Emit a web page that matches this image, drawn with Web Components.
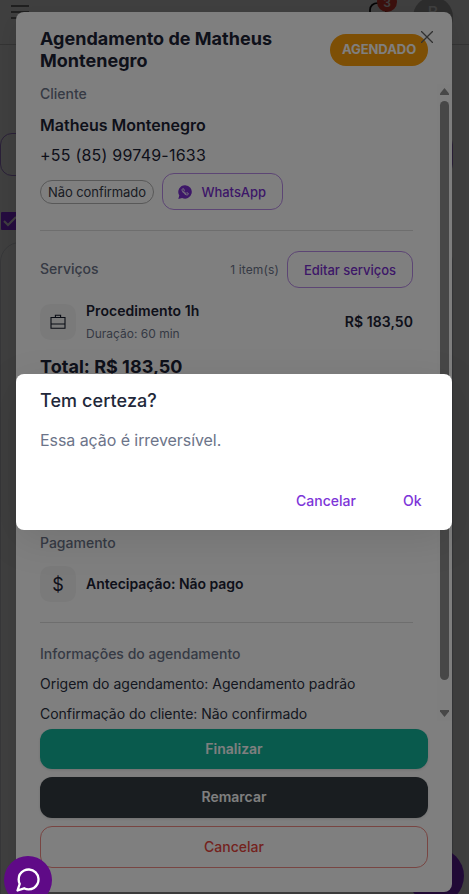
<!DOCTYPE html>
<html lang="pt-BR">
<head>
<meta charset="utf-8">
<title>Agendamento</title>
<style>
body{margin:0;height:894px;overflow:hidden;font-family:Inter,"Liberation Sans",sans-serif;color:#1c2234}
</style>
</head>
<body>
<schedule-app></schedule-app>
<script>
const define=(name,html)=>customElements.define(name,class extends HTMLElement{
  constructor(){super();const t=document.createElement('template');t.innerHTML=html;
    this.attachShadow({mode:'open'}).append(t.content.cloneNode(true));}
});

define('app-backdrop',`<style>
:host{display:block;position:absolute;inset:0;background:rgba(0,0,0,.5)}
</style>`);

define('page-behind',`<style>
:host{display:block;height:894px;background:#fff;overflow:hidden}
header{box-sizing:border-box;height:45px;border-bottom:1px solid #d0d0d0;padding:5px 16px 0 11px;display:flex;justify-content:space-between;align-items:flex-start}
.right{display:flex;gap:16px;align-items:flex-start}
.bell{position:relative;width:28px;height:28px;margin-top:-4px}
.badge{position:absolute;left:8px;top:-9px;width:20px;height:20px;border-radius:50%;background:#f04438;color:#fff;font:600 12px/22px Inter,sans-serif;text-align:center}
.avatar{width:40px;height:40px;border-radius:50%;background:#b4b4b4;color:#fff;font:500 16px/30px Inter,sans-serif;text-align:center;margin-top:-8px}
.pill{box-sizing:border-box;height:43px;margin:88px 16px 0 0;border:1px solid #a880e0;border-radius:12px}
.check{display:block;margin:36px 0 0 1px;width:18px;height:18px}
.card{height:700px;margin:12px 16px 0 0;border:1px solid #dadde4;border-radius:20px}
.fab{position:absolute;left:408px;top:848px;width:56px;height:56px;border-radius:50%;background:#8a2be2}
svg{display:block}
</style>
<header><svg width="18" height="14" viewBox="0 0 18 14" stroke="#808080" stroke-width="2"><path d="M0 1h18M0 7h18M0 13h18"/></svg>
<div class="right"><div class="bell"><svg width="28" height="28" viewBox="0 0 28 28" fill="none" stroke="#111" stroke-width="1.7"><path d="M1 18V9c0-4 3-7 8-7s8 3 8 7v9z"/></svg><span class="badge">3</span></div><div class="avatar">B</div></div></header>
<div class="pill"></div>
<svg class="check" viewBox="0 0 18 18"><rect width="18" height="18" rx="1" fill="#9430ff"/><path d="m3 9 4 4 8-8" fill="none" stroke="#fff" stroke-width="2"/></svg>
<div class="card"></div><div class="fab"></div>`);

define('ui-chip',`<style>
:host{display:block;box-sizing:border-box;height:24px;border:1px solid #b0b0b0;border-radius:12px;padding:0 7px;font-size:13px;letter-spacing:-.07px;line-height:22px;white-space:nowrap;color:#343946}
</style><slot></slot>`);

define('outline-button',`<style>
:host{box-sizing:border-box;display:flex;align-items:center;justify-content:center;height:37px;border:1px solid #b98be8;border-radius:12px;padding:0 16px;color:#7a2fd0;font-size:13px;font-weight:500;letter-spacing:-.03px;white-space:nowrap}
</style><slot></slot>`);

define('action-button',`<style>
:host{box-sizing:border-box;display:flex;align-items:center;justify-content:center;height:40px;border-radius:12px;font-size:14px;font-weight:600;padding-bottom:1px;color:#fff;background:#12b49b;box-shadow:0 1px 3px rgba(0,0,0,.12)}
:host([kind=dark]){height:41px;padding-bottom:2px;background:#323a40}
:host([kind=danger]){height:42px;background:none;border:1px solid #f08a84;color:#e8453c;font-weight:500;box-shadow:none}
</style><slot></slot>`);

define('icon-tile',`<style>
:host{display:flex;flex:none;width:36px;height:36px;border-radius:10px;background:#f5f5f5;align-items:center;justify-content:center;font-size:18px}
</style><slot></slot>`);

define('scroll-bar',`<style>
:host{display:flex;flex-direction:column;align-items:center;width:15px;padding-top:4px;box-sizing:border-box;background:#fdfdfd}
.thumb{width:9px;height:579px;margin:6px 0 30px;border-radius:5px;background:#8f8f8f}
svg{display:block;flex:none}
</style>
<svg width="9" height="7" viewBox="0 0 9 7"><path d="M4.5 0 9 5.5V7H0V5.5z" fill="#909090"/></svg>
<div class="thumb"></div>
<svg width="9" height="7" viewBox="0 0 9 7"><path d="M4.5 7 9 1.5V0H0V1.5z" fill="#909090"/></svg>`);

define('appointment-dialog',`<style>
:host{position:absolute;left:16px;top:12px;width:436px;height:880px;display:flex;flex-direction:column;background:#fff;border-radius:8px;overflow:hidden;box-shadow:0 8px 24px rgba(0,0,0,.1)}
header{height:72px;padding:4px 24px 0;display:flex;align-items:center;justify-content:space-between;box-sizing:border-box}
h2{margin:0;font-size:18px;line-height:22px;font-weight:700;letter-spacing:.02px;width:270px}
.status{width:98px;height:32px;border-radius:16px;background:#fb9e0b;color:#fff;font-size:13px;font-weight:700;letter-spacing:-.06px;line-height:31px;text-align:center}
.close{position:absolute;left:405px;top:19px}
.body{display:flex;height:637px;overflow:hidden;justify-content:space-between}
.col{padding-left:24px;width:373px}
.h{height:20px;line-height:20px;font-size:14px;font-weight:500;color:#6c7489}
.row{display:flex;align-items:center}
.line{height:1px;background:#dcdcdc}
.name{font-size:16px;font-weight:600;line-height:30px;height:30px;margin-top:6px}
.phone{font-size:16px;letter-spacing:.22px;line-height:30px;height:30px}
.small{font-size:12px;color:#6c7489}
.b{font-size:14px;font-weight:600}
.t{font-size:14px;line-height:22px;height:22px;margin-bottom:8px;color:#2a2f3f}
.actions{padding:8px 24px 0;display:flex;flex-direction:column;gap:8px}
svg{display:block}
</style>
<header><h2>Agendamento de Matheus Montenegro</h2><div class="status">AGENDADO</div></header>
<svg class="close" width="12" height="12" viewBox="0 0 12 12" stroke="#606060" stroke-width="1.3"><path d="M0 0 12 12M12 0 0 12"/></svg>
<div class="body"><div class="col">
<div class="h">Cliente</div>
<div class="name">Matheus Montenegro</div>
<div class="phone">+55 (85) 99749-1633</div>
<div class="row" style="margin-top:3px;gap:8px"><ui-chip>Não confirmado</ui-chip><outline-button><svg width="14" height="14" viewBox="0 0 14 14" style="margin:1px 9.500px 0 -1px"><path d="M7.2.2a6.7 6.7 0 1 1-3.1 12.7L.3 14l1-3.6A6.7 6.7 0 0 1 7.2.2z" fill="#7a2fd0"/><path d="M4.8 3.6c-1.3.8-.8 2.6.9 4.4 1.700 1.800 3.700 2.600 4.600 1.200.3-.6.1-.8-1.500-1.500l-.8.8C6.900 8.100 6 7.200 5.600 6.200l.7-.8c-.4-1.200-.7-1.900-1.500-1.800z" fill="none" stroke="#fff" stroke-width=".9"/></svg>WhatsApp</outline-button></div>
<div class="line" style="margin-top:20px"></div>
<div class="row" style="margin-top:20px"><span class="h" style="margin-top:-1px">Serviços</span><span class="small" style="margin:-1px 8px 0 auto;letter-spacing:.12px">1 item(s)</span><outline-button>Editar serviços</outline-button></div>
<div class="row" style="margin-top:16px;gap:10px;height:36px"><icon-tile><svg width="16" height="16" viewBox="0 0 16 16" fill="none" stroke="#121828" stroke-width="1.1"><path d="M1 3.500h14v10.700H1zM1 10h14M5.400 3.500V1.200h5.200v2.300"/></svg></icon-tile><div><div class="b" style="line-height:22px;letter-spacing:.06px">Procedimento 1h</div><div class="small" style="line-height:23px">Duração: 60 min</div></div><span class="b" style="margin:-1px 0 0 auto;letter-spacing:.06px">R$ 183,50</span></div>
<div style="font-size:18px;font-weight:700;letter-spacing:.03px;line-height:30px;height:30px;margin-top:12px">Total: R$ 183,50</div>
<div class="line" style="margin:20px 0 130px"></div>
<div class="h">Pagamento</div>
<div class="row" style="margin-top:13px;gap:10px"><icon-tile>$</icon-tile><span class="b" style="letter-spacing:-.04px;margin-top:-1px">Antecipação: Não pago</span></div>
<div class="line" style="margin-top:20px"></div>
<div class="h" style="margin-top:21px;margin-bottom:9px">Informações do agendamento</div>
<div class="t">Origem do agendamento: Agendamento padrão</div>
<div class="t" style="height:18px;line-height:18px;margin:10px 0 0;letter-spacing:-.04px">Confirmação do cliente: Não confirmado</div>
</div><scroll-bar></scroll-bar></div>
<div class="actions"><action-button>Finalizar</action-button><action-button kind="dark">Remarcar</action-button><action-button kind="danger">Cancelar</action-button></div>`);

define('confirm-dialog',`<style>
:host{position:absolute;left:16px;top:374px;width:436px;height:156px;box-sizing:border-box;background:#fff;border-radius:8px;padding:12px 24px;box-shadow:0 10px 40px rgba(0,0,0,.1)}
h3{margin:0;font-size:18px;line-height:30px;font-weight:500;letter-spacing:.08px;color:#22283a}
p{margin:12px 0 0;font-size:16px;line-height:24px;letter-spacing:-.07px;color:#6c7489}
nav{display:flex;justify-content:flex-end;gap:47px;margin-top:39px;padding-right:6.5px;font-size:14px;line-height:20px;font-weight:500;color:#7d35d8}
</style><h3>Tem certeza?</h3><p>Essa ação é irreversível.</p><nav><span>Cancelar</span><span>Ok</span></nav>`);

define('chat-bubble',`<style>
:host{position:absolute;left:4px;top:856px;width:48px;height:48px;border-radius:50%;background:#5f0a87;display:flex;align-items:center;justify-content:center}
</style><svg width="28" height="28" viewBox="0 0 24 24" fill="none" stroke="#fff" stroke-width="2" stroke-linejoin="round"><path d="M21 11.500a8.380 8.380 0 0 1-.9 3.800 8.500 8.500 0 0 1-7.600 4.700 8.380 8.380 0 0 1-3.800-.9L3 21l1.900-5.700a8.380 8.380 0 0 1-.9-3.800 8.500 8.500 0 0 1 4.700-7.600 8.380 8.380 0 0 1 3.800-.9h.5a8.480 8.480 0 0 1 8 8v.5z"/></svg>`);

define('schedule-app',`<style>
:host{display:block;position:relative;height:894px;overflow:hidden}
</style><page-behind></page-behind><app-backdrop></app-backdrop><appointment-dialog></appointment-dialog><app-backdrop></app-backdrop><confirm-dialog></confirm-dialog><chat-bubble></chat-bubble>`);
</script>
</body>
</html>
